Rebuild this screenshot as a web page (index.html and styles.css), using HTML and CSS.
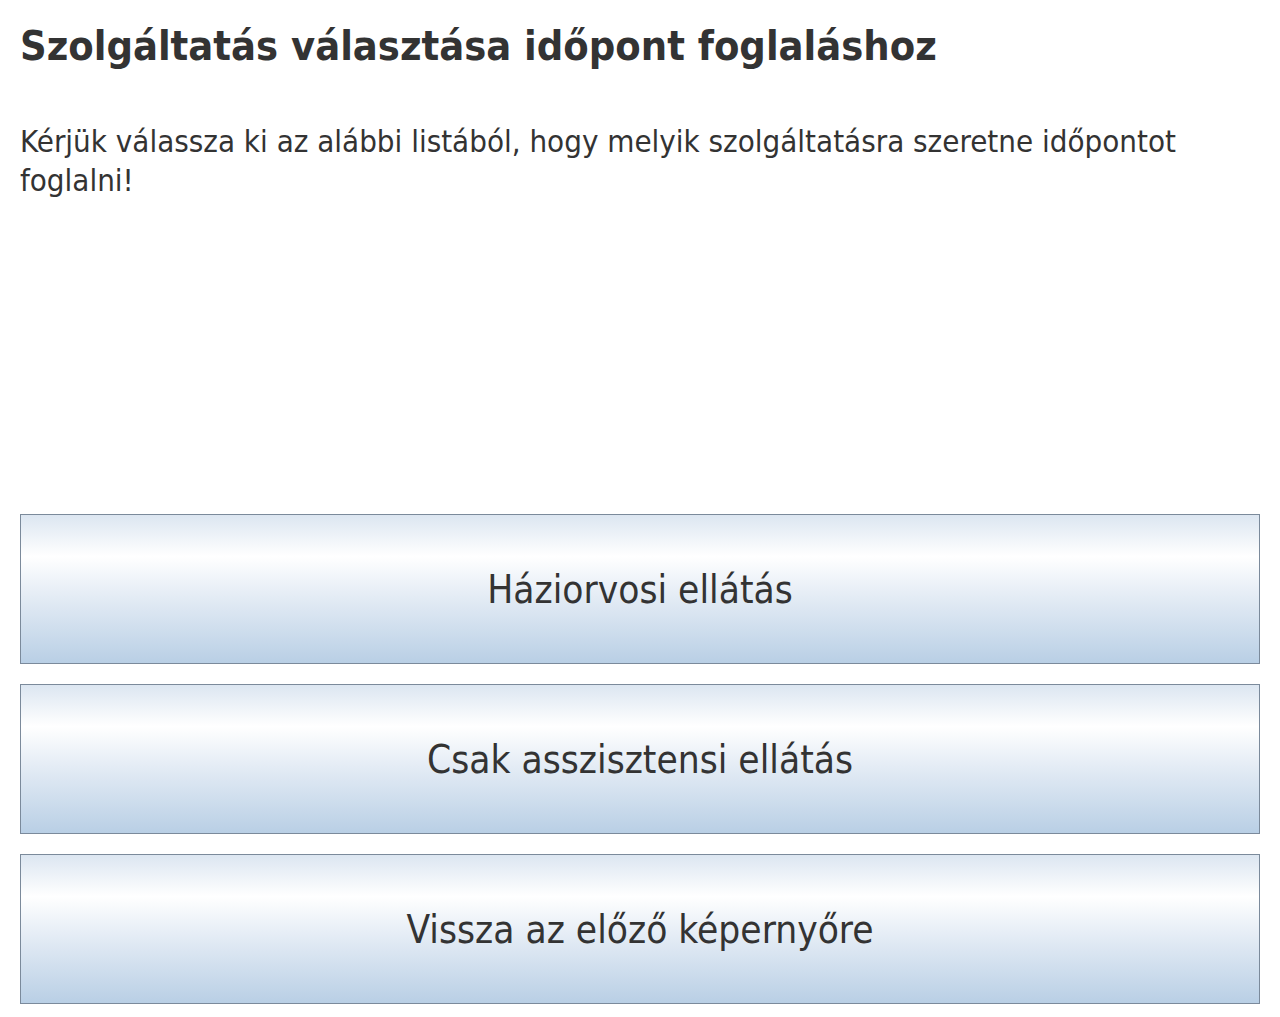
FILE: index.html
```html
<!DOCTYPE html>
<html lang="hu">
<head>
<meta charset="utf-8">
<title>Szolgáltatás választása</title>
<link rel="stylesheet" href="styles.css">
</head>
<body>
<div class="page">
  <h1 class="title">Szolgáltatás választása időpont foglaláshoz</h1>
  <p class="intro">Kérjük válassza ki az alábbi listából, hogy melyik szolgáltatásra szeretne időpontot foglalni!</p>
  <div class="choices">
    <button class="choice">Háziorvosi ellátás</button>
    <button class="choice">Csak asszisztensi ellátás</button>
    <button class="choice">Vissza az előző képernyőre</button>
  </div>
</div>
</body>
</html>
```
FILE: styles.css
```css
html, body {
  margin: 0;
  padding: 0;
  background: #ffffff;
}
.page {
  padding: 20px 20px 0 20px;
  font-family: "DejaVu Sans Condensed", "DejaVu Sans", sans-serif;
  color: #333333;
}
.title {
  margin: 0;
  font-size: 41.2px;
  line-height: 52px;
  font-weight: bold;
}
.intro {
  margin: 50px 0 0 0;
  font-size: 31px;
  line-height: 39px;
}
.choices {
  margin-top: 314px;
  display: flex;
  flex-direction: column;
  gap: 20px;
}
.choice {
  display: block;
  width: 100%;
  height: 150px;
  border: 1px solid #7b8a9b;
  background: linear-gradient(to bottom, #dce6f1 0%, #ffffff 28%, #e4ecf5 55%, #b9cfe5 100%);
  font-family: "DejaVu Sans Condensed", "DejaVu Sans", sans-serif;
  font-size: 38.5px;
  color: #333333;
  padding: 0;
  margin: 0;
  cursor: pointer;
}
```
